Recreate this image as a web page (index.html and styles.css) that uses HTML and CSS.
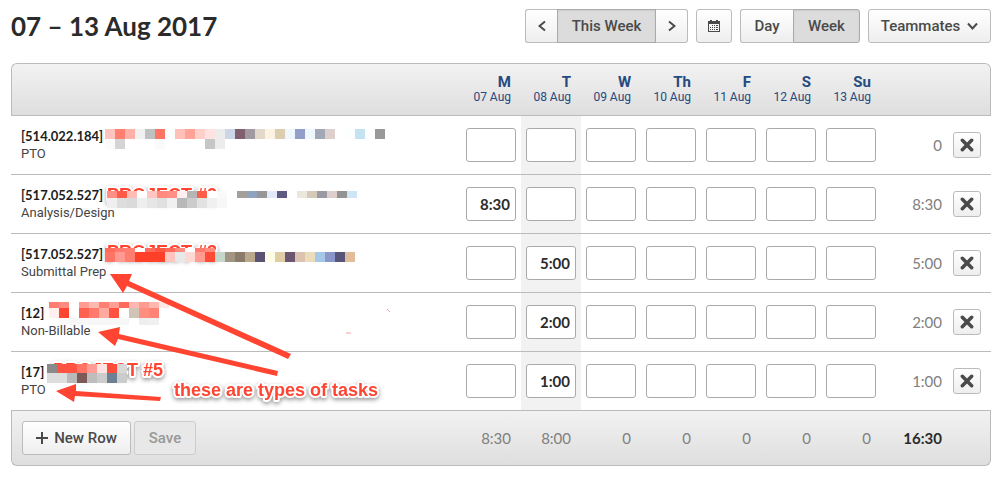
FILE: index.html
```html
<!DOCTYPE html>
<html lang="en">
<head>
  <meta charset="UTF-8">
  <title>Timesheet: 07 – 13 Aug 2017</title>
  <meta name="viewport" content="width=device-width, initial-scale=1">
  <link rel="stylesheet" href="styles.css">
</head>
<body>

  <header class="toolbar">
    <h1>07 – 13 Aug 2017</h1>
    <div class="btn-group">
      <button type="button" class="btn btn-arrow" aria-label="Previous week">
        <svg width="8" height="12" viewBox="0 0 8 12"><path d="M7 1.5 L1.5 6 L7 10.5"/></svg>
      </button>
      <button type="button" class="btn btn-this active">This Week</button>
      <button type="button" class="btn btn-arrow" aria-label="Next week">
        <svg width="8" height="12" viewBox="0 0 8 12"><path d="M1 1.5 L6.5 6 L1 10.5"/></svg>
      </button>
    </div>
    <button type="button" class="btn btn-calendar" aria-label="Choose a date">
      <svg class="solid" width="12" height="12" viewBox="0 0 12 12">
        <path fill-rule="evenodd" d="M0 1h2V0h2v1h4V0h2v1h2v11H0zM1 4v7h10V4z"/>
        <path d="M4 5h1v1H4zM6 5h1v1H6zM8 5h2v1H8zM2 7h1v1H2zM4 7h1v1H4zM6 7h1v1H6zM8 7h2v1H8zM2 9h1v1H2zM4 9h1v1H4zM6 9h1v1H6zM8 9h2v1H8z"/>
      </svg>
    </button>
    <div class="btn-group">
      <button type="button" class="btn btn-day">Day</button>
      <button type="button" class="btn btn-week active">Week</button>
    </div>
    <button type="button" class="btn btn-team">Teammates
      <svg width="11" height="8" viewBox="0 0 11 8"><path d="M1 1.5 L5.5 6.5 L10 1.5"/></svg>
    </button>
  </header>

  <main class="sheet">
    <table>
      <thead>
        <tr>
          <th class="task"></th>
          <th class="day">M<span>07 Aug</span></th>
          <th class="day">T<span>08 Aug</span></th>
          <th class="day">W<span>09 Aug</span></th>
          <th class="day">Th<span>10 Aug</span></th>
          <th class="day">F<span>11 Aug</span></th>
          <th class="day">S<span>12 Aug</span></th>
          <th class="day">Su<span>13 Aug</span></th>
          <th class="total"></th>
          <th class="remove"></th>
        </tr>
      </thead>
      <tbody>
        <tr>
          <td class="task"><strong>[514.022.184]</strong>PTO</td>
          <td><input type="text" aria-label="PTO, Monday"></td>
          <td class="today"><input type="text" aria-label="PTO, Tuesday"></td>
          <td><input type="text" aria-label="PTO, Wednesday"></td>
          <td><input type="text" aria-label="PTO, Thursday"></td>
          <td><input type="text" aria-label="PTO, Friday"></td>
          <td><input type="text" aria-label="PTO, Saturday"></td>
          <td><input type="text" aria-label="PTO, Sunday"></td>
          <td class="total">0</td>
          <td class="remove"><button type="button" class="btn" aria-label="Delete row"><svg width="12" height="12" viewBox="0 0 12 12"><path d="M2 2 L10 10 M10 2 L2 10"/></svg></button></td>
        </tr>
        <tr>
          <td class="task"><strong>[517.052.527]</strong>Analysis/Design</td>
          <td><input type="text" value="8:30" aria-label="Analysis/Design, Monday"></td>
          <td class="today"><input type="text" aria-label="Analysis/Design, Tuesday"></td>
          <td><input type="text" aria-label="Analysis/Design, Wednesday"></td>
          <td><input type="text" aria-label="Analysis/Design, Thursday"></td>
          <td><input type="text" aria-label="Analysis/Design, Friday"></td>
          <td><input type="text" aria-label="Analysis/Design, Saturday"></td>
          <td><input type="text" aria-label="Analysis/Design, Sunday"></td>
          <td class="total">8:30</td>
          <td class="remove"><button type="button" class="btn" aria-label="Delete row"><svg width="12" height="12" viewBox="0 0 12 12"><path d="M2 2 L10 10 M10 2 L2 10"/></svg></button></td>
        </tr>
        <tr>
          <td class="task"><strong>[517.052.527]</strong>Submittal Prep</td>
          <td><input type="text" aria-label="Submittal Prep, Monday"></td>
          <td class="today"><input type="text" value="5:00" aria-label="Submittal Prep, Tuesday"></td>
          <td><input type="text" aria-label="Submittal Prep, Wednesday"></td>
          <td><input type="text" aria-label="Submittal Prep, Thursday"></td>
          <td><input type="text" aria-label="Submittal Prep, Friday"></td>
          <td><input type="text" aria-label="Submittal Prep, Saturday"></td>
          <td><input type="text" aria-label="Submittal Prep, Sunday"></td>
          <td class="total">5:00</td>
          <td class="remove"><button type="button" class="btn" aria-label="Delete row"><svg width="12" height="12" viewBox="0 0 12 12"><path d="M2 2 L10 10 M10 2 L2 10"/></svg></button></td>
        </tr>
        <tr>
          <td class="task"><strong>[12]</strong>Non-Billable</td>
          <td><input type="text" aria-label="Non-Billable, Monday"></td>
          <td class="today"><input type="text" value="2:00" aria-label="Non-Billable, Tuesday"></td>
          <td><input type="text" aria-label="Non-Billable, Wednesday"></td>
          <td><input type="text" aria-label="Non-Billable, Thursday"></td>
          <td><input type="text" aria-label="Non-Billable, Friday"></td>
          <td><input type="text" aria-label="Non-Billable, Saturday"></td>
          <td><input type="text" aria-label="Non-Billable, Sunday"></td>
          <td class="total">2:00</td>
          <td class="remove"><button type="button" class="btn" aria-label="Delete row"><svg width="12" height="12" viewBox="0 0 12 12"><path d="M2 2 L10 10 M10 2 L2 10"/></svg></button></td>
        </tr>
        <tr>
          <td class="task"><strong>[17]</strong>PTO</td>
          <td><input type="text" aria-label="PTO, Monday"></td>
          <td class="today"><input type="text" value="1:00" aria-label="PTO, Tuesday"></td>
          <td><input type="text" aria-label="PTO, Wednesday"></td>
          <td><input type="text" aria-label="PTO, Thursday"></td>
          <td><input type="text" aria-label="PTO, Friday"></td>
          <td><input type="text" aria-label="PTO, Saturday"></td>
          <td><input type="text" aria-label="PTO, Sunday"></td>
          <td class="total">1:00</td>
          <td class="remove"><button type="button" class="btn" aria-label="Delete row"><svg width="12" height="12" viewBox="0 0 12 12"><path d="M2 2 L10 10 M10 2 L2 10"/></svg></button></td>
        </tr>
      </tbody>
      <tfoot>
        <tr>
          <td class="actions">
            <div class="buttons">
              <button type="button" class="btn btn-new"><svg width="12" height="12" viewBox="0 0 12 12"><path d="M6 0 V12 M0 6 H12"/></svg>New Row</button>
              <button type="button" class="btn btn-save" disabled>Save</button>
            </div>
          </td>
          <td>8:30</td>
          <td>8:00</td>
          <td>0</td>
          <td>0</td>
          <td>0</td>
          <td>0</td>
          <td>0</td>
          <td class="total">16:30</td>
          <td class="remove"></td>
        </tr>
      </tfoot>
    </table>

    <svg class="notes" width="400" height="350" viewBox="11 63 400 350">
      <g class="note-text">
        <text x="107" y="201">PROJECT #2</text>
        <text x="107" y="258">PROJECT #3</text>
        <text x="53" y="376">PROJECT #5</text>
        <text x="174" y="396">these are types of tasks</text>
      </g>
      <g id="mosaic" shape-rendering="crispEdges"></g>
      <g class="arrows">
        <path d="M110 274 L132 274 L129 281 L291 354 L288 359 L127 286 L123 293 Z"/>
        <path d="M98 332 L120 327 L119 334 L278 371 L277 376 L118 339 L115 346 Z"/>
        <path d="M56 391 L76 384 L76 391 L161 397 L160 401 L75 396 L74 402 Z"/>
      </g>
      <path class="speck" d="M387 309 L390 312 M346 333 H351"/>
    </svg>
  </main>

  <script src="mosaic.js"></script>
</body>
</html>
```
FILE: styles.css
```css
body {
  font-family: Lato, "Helvetica Neue", Arial, sans-serif;
  margin: 9px 11px;
  color: #2b2b2b;
  background: #fff;
}
.toolbar {
  display: flex;
  align-items: center;
  gap: 8px;
  margin-bottom: 20px;
}
h1 {
  flex: 1;
  margin: 0;
  font-size: 26px;
  line-height: 34px;
  font-weight: bold;
  white-space: nowrap;
}
.btn {
  display: inline-flex;
  align-items: center;
  justify-content: center;
  box-sizing: border-box;
  height: 34px;
  padding: 0;
  border: 1px solid #bbb;
  border-radius: 3px;
  background: linear-gradient(#fff, #eee);
  color: #4a4a4a;
  font-family: Roboto, Arial, sans-serif;
  font-size: 15px;
  font-weight: 500;
}
.btn svg {
  fill: none;
  stroke: #4a4a4a;
  stroke-width: 2;
}
.btn svg.solid {
  fill: #4a4a4a;
  stroke: none;
}
.btn.active {
  background: #dcdcdc;
  border-color: #aaa;
  box-shadow: inset 0 1px 2px #ccc;
}
.btn-group {
  display: flex;
}
.btn-group .btn:not(:first-child) {
  border-top-left-radius: 0;
  border-bottom-left-radius: 0;
}
.btn-group .btn:not(:last-child) {
  border-top-right-radius: 0;
  border-bottom-right-radius: 0;
}
.btn-group .btn + .btn:not(.active) {
  border-left: none;
}
.btn-group .btn:has(+ .active) {
  border-right: none;
}
.btn-arrow {
  width: 32px;
}
.btn-this {
  width: 99px;
}
.btn-calendar {
  width: 36px;
}
.btn-day {
  width: 53px;
}
.btn-week {
  width: 67px;
}
.btn-team {
  width: 123px;
  gap: 7px;
}

/* timesheet grid */
.sheet {
  position: relative;
}
table {
  width: 100%;
  table-layout: fixed;
  border-collapse: separate;
  border-spacing: 0;
}
th, td {
  padding: 0;
}
thead th {
  height: 51px;
  border-top: 1px solid #bbb;
  border-bottom: 1px solid #bbb;
  background: linear-gradient(#f2f2f2, #dedede);
  color: #254a80;
  text-align: right;
  font-family: Roboto, Arial, sans-serif;
  font-size: 15px;
  line-height: 16px;
}
thead th span {
  display: block;
  font-size: 12px;
  line-height: 15px;
  font-weight: normal;
}
thead .day {
  width: 50px;
  padding-right: 10px;
}
thead .total {
  width: 61px;
}
thead .remove {
  width: 48px;
}
thead th:first-child, tfoot td:first-child {
  border-left: 1px solid #bbb;
}
thead th:last-child, tfoot td:last-child {
  border-right: 1px solid #bbb;
}
thead th:first-child {
  border-top-left-radius: 6px;
}
thead th:last-child {
  border-top-right-radius: 6px;
}
tbody td {
  height: 58px;
  border-bottom: 1px solid #bbb;
  text-align: center;
}
tbody .task {
  padding-left: 10px;
  text-align: left;
  font-family: Roboto, Arial, sans-serif;
  font-size: 13px;
  line-height: 18px;
  color: #444;
}
.task strong {
  display: block;
  font-family: Lato, Arial, sans-serif;
  color: #1c1c1c;
}
.today {
  background: #f2f2f2;
}
input {
  display: block;
  box-sizing: border-box;
  width: 50px;
  height: 34px;
  margin: 0 auto;
  padding: 0 5px;
  border: 1px solid #aaa;
  border-radius: 3px;
  background: #fff;
  color: #2b2b2b;
  font-family: inherit;
  font-size: 15px;
  font-weight: bold;
  text-align: right;
}
tbody .total {
  text-align: right;
  font-size: 15px;
  color: #808080;
}
tbody .remove .btn {
  display: flex;
  width: 28px;
  height: 26px;
  margin: 0 10px 0 auto;
}
.remove .btn svg {
  width: 14px;
  height: 14px;
  stroke-width: 3;
  stroke-linecap: round;
}
tfoot td {
  height: 54px;
  padding-right: 10px;
  border-bottom: 1px solid #bbb;
  background: linear-gradient(#f2f2f2, #dedede);
  color: #808080;
  text-align: right;
  font-size: 15px;
}
tfoot td:first-child {
  padding: 0 0 0 10px;
  border-bottom-left-radius: 6px;
}
tfoot td:last-child {
  border-bottom-right-radius: 6px;
}
tfoot .total {
  padding-right: 0;
  color: #2b2b2b;
  font-weight: bold;
}
.buttons {
  display: flex;
  gap: 3px;
}
.btn-new {
  width: 109px;
  gap: 6px;
}
.btn-save {
  width: 62px;
  background: #e8e8e8;
  border-color: #ccc;
  color: #999;
}

/* hand-drawn notes over the task column */
.notes {
  position: absolute;
  top: 0;
  left: 0;
  pointer-events: none;
}
.note-text {
  font: bold 18px "Liberation Sans", Arial, sans-serif;
  fill: #ff4431;
  stroke: #fff;
  stroke-width: 4px;
  stroke-linejoin: round;
  paint-order: stroke;
  filter: drop-shadow(0 2px 2px rgba(0, 0, 0, 0.4));
}
.arrows {
  fill: #ff4431;
}
.speck {
  stroke: #f5a0a0;
}
```
FILE: mosaic.js
```js
// colour blocks that cover the client names: x, y, height, then one colour per 10px block
var strips = [
  [105, 129, 10, "ffc4be ff7f70 ffb0a8 f1f1f1 bfc1c0 ff7565 fff ffc0b9 ffa298 ffcfca ffe3e0 ececec cdd6e8 80606f a29aa0 e2d8cb fcf3e2 dccdb0 eef7fb 939fca eff8fd a3a8b6 dccfce fff fbffff c5e2f2 fff 999"],
  [105, 139, 10, "fbfbfb d5d5d5 fff fff fff fafafa fff fff fff fff c6c6c6 ececec"],
  [107, 191, 7, "ff8f84 ff5a48 ffbdb5 fff ffc5c0 ff8a7d ff9085 fff0f0 b5b5b5 ff5c49 fff fafafa"],
  [107, 198, 10, "f0eeee ddd dadada eee e6e6e6 e0e0e0 f0f0f0 b8b8b8 ccc e2e2e2 f0f0f0 f7f7f7"],
  [237, 191, 7, "a39f9a 8fa3bf 979797 e2e9f7 5f5a82 fff eae8dc d5c9b8 9a9aa5 dccfce 939393 cde5f4"],
  [105, 248, 4, "ff6a5b ff7a6c ff8073 fff ff6a5b ff5543 ff6a5b ff8a7d fff ff7a6c ff8a7d"],
  [105, 252, 10, "ff7465 ff9a90 ff7d70 ff4029 ff4029 ff4029 ffc5be e8e8e8 ffd8d4 ff9b90 ff4a36 c5d6cb a39584 8b7b6a bba98e 5a5374 fffde6 dfcda5 6c5670 dcc3b0 ebdcbb a5c8e8 8b97c9 575678 e2bd9c"],
  [49, 302, 6, "ff7d70 ff8a7f fff ff9b92 ffb8b0 ff8073 ffa096 ff6a5b ffb7b0 ff9c92 ffb8b0 ffe8e6"],
  [49, 308, 10, "fff0ee ff4430 fff ff6150 ff7a6c ffaaa1 ff5340 fff cfc4b6 ff8d80 ff8477"],
  [49, 318, 7, "fff fbfbfb f7f7f7 f7f7f7 f7f7f7 f7f7f7 f7f7f7 f7f7f7 fff eee f0f0f0"],
  [47, 364, 9, "8a8a8a ff5240 ff5240 ff7465 ff9d94 ffe3e0 ff4c38 d8d8d8"],
  [47, 373, 10, "ddd ddd bababa 7d5a57 bdbdbd ccc 6c8294 ccc"]
];

var mosaic = document.getElementById("mosaic");
strips.forEach(function (strip) {
  strip[3].split(" ").forEach(function (color, i) {
    var rect = document.createElementNS("http://www.w3.org/2000/svg", "rect");
    rect.setAttribute("x", strip[0] + i * 10);
    rect.setAttribute("y", strip[1]);
    rect.setAttribute("width", 10);
    rect.setAttribute("height", strip[2]);
    rect.setAttribute("fill", "#" + color);
    mosaic.appendChild(rect);
  });
});
```
